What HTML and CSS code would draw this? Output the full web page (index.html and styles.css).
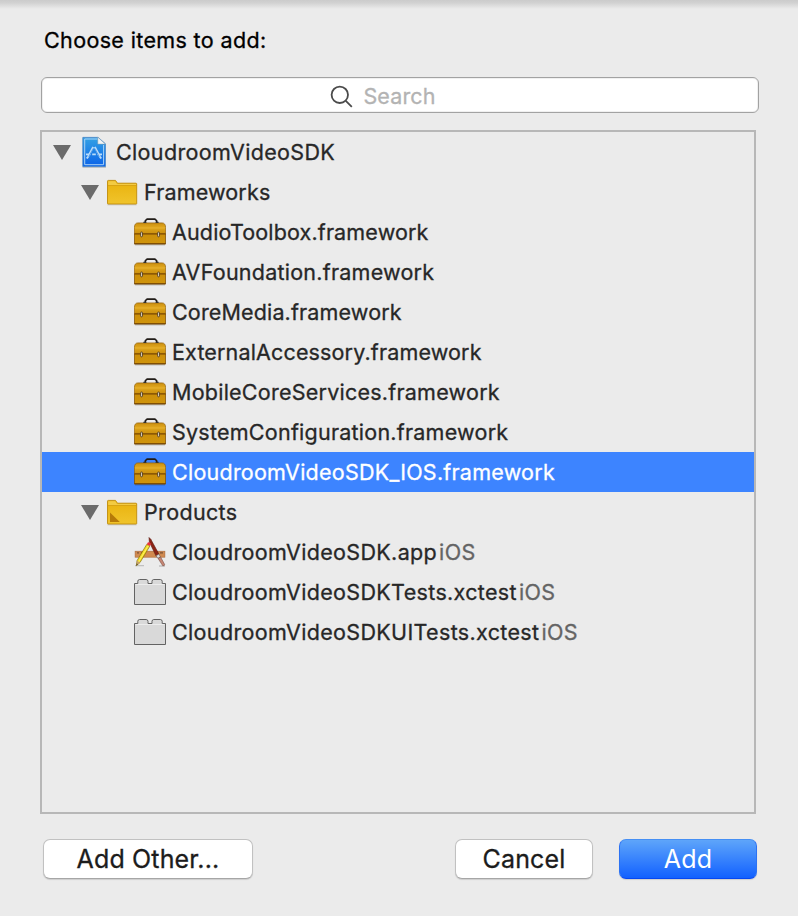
FILE: index.html
```html
<!DOCTYPE html>
<html lang="en">
<head>
<meta charset="utf-8">
<title>Choose items to add</title>
<link rel="stylesheet" href="styles.css">
</head>
<body>
<svg class="defs" width="0" height="0" aria-hidden="true">
  <defs>
    <linearGradient id="g-doc" x1="0" y1="0" x2="0" y2="1"><stop offset="0" stop-color="#35a2e4"/><stop offset="1" stop-color="#0a62e8"/></linearGradient>
    <linearGradient id="g-folder" x1="0" y1="0" x2="0" y2="1"><stop offset="0" stop-color="#e9b10c"/><stop offset="1" stop-color="#f0c42c"/></linearGradient>
    <linearGradient id="g-lid" x1="0" y1="0" x2="0" y2="1"><stop offset="0" stop-color="#c98e10"/><stop offset=".4" stop-color="#e0a61c"/><stop offset="1" stop-color="#cb900e"/></linearGradient>
    <linearGradient id="g-box" x1="0" y1="0" x2="0" y2="1"><stop offset="0" stop-color="#cc8f0a"/><stop offset="1" stop-color="#d0940c"/></linearGradient>
    <symbol id="arrow" viewBox="0 0 18 15"><path d="M0 0h18L9 15z" fill="#6b6b6b"/></symbol>
    <symbol id="project" viewBox="0 0 32 32">
      <path d="M4.5 31.2h23.5" stroke="#000" stroke-opacity=".22"/>
      <path d="M4.8 1.4h15.4l7.2 6.4v22.8H4.8z" fill="url(#g-doc)" stroke="#3d7fc4" stroke-width=".8"/>
      <path d="M19.4 3H6.7v25.7h18.9V9" fill="none" stroke="#a9d3f6" stroke-width="1"/>
      <path d="M19.8 1.2v6.9h7.4z" fill="#f3f5f6" stroke="#8fa0aa" stroke-width=".5"/>
      <path d="m15.2 11-5 9.5-1.4 2M16.8 11l5 9.5 1.4 2" fill="none" stroke="#b9dcfa" stroke-width="2"/>
      <path d="M8 18.4h4.5m1.7 0h3.6m1.7 0h4.5" stroke="#b9dcfa" stroke-width="1.9"/>
      <path d="m15.3 12.5-4.6 8.3M16.7 12.5l4.6 8.3" stroke="#2e81df" stroke-width=".7"/>
    </symbol>
    <symbol id="folder" viewBox="0 0 32 32">
      <path d="M1.5 28.8h29" stroke="#000" stroke-opacity=".18"/>
      <path d="M1.5 27.5V5.2q0-.8.8-.8h7.2l2 2.8H30q.7 0 .7.7v19.6q0 .5-.6.5H2q-.5 0-.5-.5z" fill="url(#g-folder)" stroke="#c18c0b" stroke-width=".9"/>
      <path d="M2.2 5.2h7l1.8 2.7h19v1.4H2.2z" fill="#f3cb44"/>
      <path d="M2 9.5h28.3" stroke="#cc960b" stroke-width=".6"/>
    </symbol>
    <symbol id="toolbox" viewBox="0 0 32 32">
      <path d="M1 28.9h30" stroke="#000" stroke-opacity=".25"/>
      <path d="M.4 11.5q.1-4.6 3.6-4.6h24q3.5 0 3.6 4.6V18H.4z" fill="url(#g-lid)" stroke="#926008" stroke-width=".7"/>
      <path d="M.4 18h31.2v10H.4z" fill="url(#g-box)" stroke="#7d4c04" stroke-width=".8"/>
      <path d="M1 12h30" stroke="#e9b535" stroke-width=".8"/><path d="M.5 17.8h31" stroke="#7d4c04" stroke-width=".8"/>
      <path d="M.5 27.7h31" stroke="#744503"/>
      <path d="M11.3 6V5q0-.5.6-.9l1.3-1h7.6l1.3 1q.6.4.6.9v1" fill="none" stroke="#211c18" stroke-width="1.7"/>
      <path d="M9.4 6.4h3M21.6 6.4h3" stroke="#333" stroke-width="1.4"/>
      <rect x="6.6" y="16" width="1.9" height="4.8" rx=".9" fill="#ded5c2" stroke="#4b3415" stroke-width=".8"/>
      <rect x="23.6" y="16" width="1.9" height="4.8" rx=".9" fill="#ded5c2" stroke="#4b3415" stroke-width=".8"/>
    </symbol>
    <symbol id="app" viewBox="0 0 32 32">
      <path d="M1 29.6h9M25 30h6" stroke="#000" stroke-opacity=".18" stroke-width="1.4"/>
      <rect x="1.1" y="15.2" width="29.8" height="6" fill="#d18a50" stroke="#a9683a" stroke-width=".6"/>
      <path d="M3 16.8h2m2 0h2m13 0h2m2 0h3" stroke="#795033" stroke-width="1.2"/>
      <path d="m15 1.5 1.8 1.8 8.2 15-2.9 1.8-6.7-14z" fill="#8c2415" stroke="#5a1a12" stroke-width=".6"/>
      <path d="m22.1 19.8 2.8-1.7 1.5 3-2.3 1.4z" fill="#ddd" stroke="#555" stroke-width=".5"/>
      <path d="m24 22.3 2.5-1.4 4.1 7.5q0 1.6-1.8 1.4z" fill="#c78673" stroke="#75483e" stroke-width=".6"/>
      <path d="m12.8 8.3 3 1.8L6 26.5l-3.6 3.2.6-5z" fill="#f3dd25" stroke="#857009" stroke-width=".7"/>
      <path d="m14.4 9.5-10 16.6" stroke="#fff36b" stroke-width=".9"/>
      <path d="m12.8 8.3 1.2-2q2-.2 3 1.6l-1.2 2.2z" fill="#ed3038"/>
      <path d="m3 24.7 3 1.8-3.6 3.2z" fill="#c6a16a"/><path d="m2.7 27.4 1.2.8-1.5 1.5z" fill="#332c22"/>
    </symbol>
    <symbol id="block" viewBox="0 0 32 32">
      <path d="M.5 28.5v-21h3.3V5.3q.2-1.8 1.7-1.8h6.7q1.6 0 1.8 1.8v2.2h4V5.3q.2-1.8 1.7-1.8h6.7q1.6 0 1.8 1.8v2.2h3.3v21z" fill="#d9d9d9" stroke="#636363"/>
      <path d="M1.5 8.5h29" stroke="#ececec"/>
    </symbol>
  </defs>
</svg>
<main class="sheet">
  <h1 class="title">Choose items to add:</h1>
  <div class="search">
    <svg class="search-icon" viewBox="0 0 24 24"><circle cx="9.8" cy="9.8" r="8.2"/><path d="m15.8 15.8 6 6"/></svg>
    <span class="placeholder">Search</span>
  </div>
  <ul class="tree">
    <li class="row loose"><svg class="arrow"><use href="#arrow"/></svg><svg class="icon"><use href="#project"/></svg><span class="name">CloudroomVideoSDK</span></li>
    <li class="row group tight"><svg class="arrow"><use href="#arrow"/></svg><svg class="icon"><use href="#folder"/></svg><span class="name">Frameworks</span></li>
    <li class="row item tight"><svg class="icon"><use href="#toolbox"/></svg><span class="name">AudioToolbox.framework</span></li>
    <li class="row item"><svg class="icon"><use href="#toolbox"/></svg><span class="name">AVFoundation.framework</span></li>
    <li class="row item tight"><svg class="icon"><use href="#toolbox"/></svg><span class="name">CoreMedia.framework</span></li>
    <li class="row item tight"><svg class="icon"><use href="#toolbox"/></svg><span class="name">ExternalAccessory.framework</span></li>
    <li class="row item"><svg class="icon"><use href="#toolbox"/></svg><span class="name">MobileCoreServices.framework</span></li>
    <li class="row item"><svg class="icon"><use href="#toolbox"/></svg><span class="name">SystemConfiguration.framework</span></li>
    <li class="row item selected"><svg class="icon"><use href="#toolbox"/></svg><span class="name">CloudroomVideoSDK_IOS.framework</span></li>
    <li class="row group loose"><svg class="arrow"><use href="#arrow"/></svg><svg class="icon" viewBox="0 0 32 32"><use href="#folder"/><path d="M4 16.5 13.8 26H4z" fill="#b67a08"/></svg><span class="name">Products</span></li>
    <li class="row item loose"><svg class="icon"><use href="#app"/></svg><span class="name">CloudroomVideoSDK.app</span><span class="platform">iOS</span></li>
    <li class="row item loose"><svg class="icon"><use href="#block"/></svg><span class="name">CloudroomVideoSDKTests.xctest</span><span class="platform">iOS</span></li>
    <li class="row item loose"><svg class="icon"><use href="#block"/></svg><span class="name">CloudroomVideoSDKUITests.xctest</span><span class="platform">iOS</span></li>
  </ul>
  <footer class="actions">
    <button class="btn other">Add Other...</button>
    <button class="btn">Cancel</button>
    <button class="btn primary">Add</button>
  </footer>
</main>
</body>
</html>
```
FILE: styles.css
```css
* { box-sizing: border-box; }
body { margin: 0; background: #ebebeb; font-family: Inter, "Liberation Sans", sans-serif; -webkit-text-stroke: .3px; }
.defs { position: absolute; }
.sheet {
  height: 916px;
  padding: 26px 39px 0 40px;
  background: linear-gradient(#cbcbcb, #d2d2d2 3px, #e7e7e7 8px, #ebebeb 9px);
}
.title { margin: 0 0 0 4px; height: 51px; font-size: 21.5px; line-height: 28px; font-weight: 400; letter-spacing: .36px; color: #000; }
.search {
  display: flex; align-items: center; justify-content: center;
  width: 718px; height: 36px; margin-left: 1px; padding-right: 34px;
  border: 1px solid #a2a2a2; border-radius: 6px; background: #fff;
  box-shadow: inset 0 0 0 1px #f0f0f0;
}
.search-icon { width: 24px; height: 24px; margin: 3px 9px 0 0; fill: none; stroke: #4b4b4b; stroke-width: 1.8; }
.placeholder { padding-top: 2px; font-size: 21.5px; line-height: 28px; letter-spacing: .15px; color: #b3b3b3; }
.tree {
  width: 716px; height: 684px; margin: 17px 0 0; padding: 0;
  border: 2px solid #b7b7b7; list-style: none;
}
.row { display: flex; align-items: center; height: 40px; padding-left: 11px; color: #272727; font-size: 21.5px; letter-spacing: .24px; white-space: nowrap; }
.tight { letter-spacing: .15px; }
.loose { letter-spacing: .34px; }
.group { padding-left: 39px; }
.item { padding-left: 92px; }
.selected { background: #3d84ff; color: #fff; }
.arrow { width: 18px; height: 15px; margin-right: 7px; }
.icon { width: 32px; height: 32px; margin-right: 6px; }
.platform { margin-left: 2px; color: #646464; }
.actions { display: flex; margin: 25px 0 0 3px; }
.btn {
  width: 138px; height: 40px; padding: 0 0 1px; margin-right: 26px;
  border: 1px solid #c1c1c1; border-bottom-color: #a6a6a6; border-radius: 7px;
  background: #fff; box-shadow: 0 1px 1px rgba(0, 0, 0, .13);
  font: 400 25px Inter, "Liberation Sans", sans-serif; letter-spacing: .15px; color: #1c1c1c;
}
.other { width: 210px; margin-right: 202px; }
.primary { margin-right: 0; border-color: #468ff4 #2c72f3 #0647f2; background: linear-gradient(#5ea5fa, #1261ff); color: #fff; -webkit-text-stroke: 0; }
```
